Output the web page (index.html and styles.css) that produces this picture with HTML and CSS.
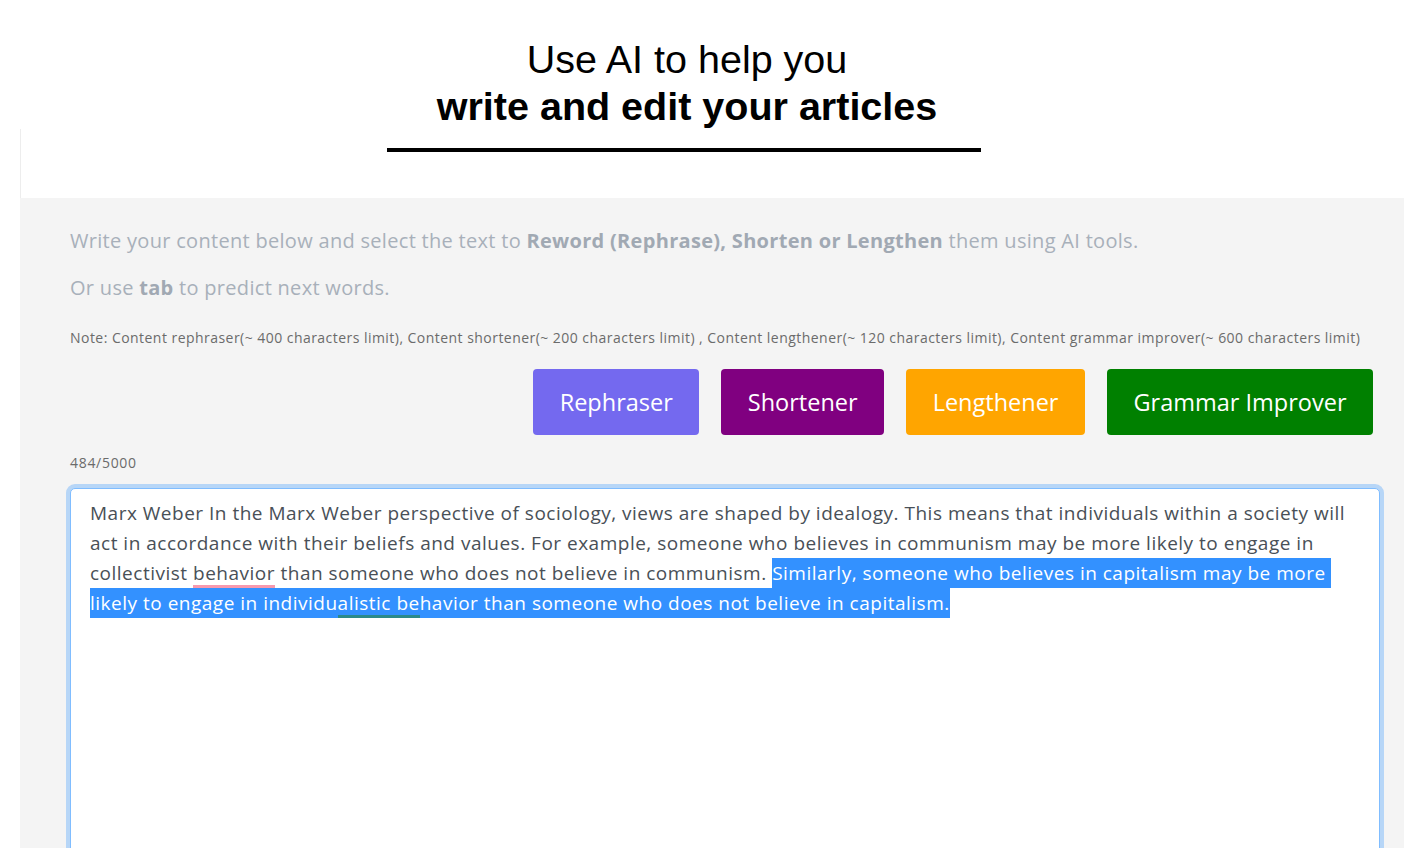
FILE: index.html
```html
<!DOCTYPE html>
<html lang="en">
<head>
<meta charset="utf-8">
<title>AI Writer</title>
<link rel="stylesheet" href="styles.css">
</head>
<body>
<div class="page">
  <header class="hero">
    <h1 class="hero-title"><span class="hero-light">Use AI to help you</span><span class="hero-bold">write and edit your articles</span></h1>
  </header>
  <section class="panel">
    <div class="panel-top"><div class="divider"></div></div>
    <div class="panel-body">
      <p class="intro intro-first">Write your content below and select the text to <b>Reword (Rephrase), Shorten or Lengthen</b> them using AI tools.</p>
      <p class="intro intro-second">Or use <b>tab</b> to predict next words.</p>
      <p class="note">Note: Content rephraser(~ 400 characters limit), Content shortener(~ 200 characters limit) , Content lengthener(~ 120 characters limit), Content grammar improver(~ 600 characters limit)</p>
      <div class="actions">
        <button class="btn btn-rephrase">Rephraser</button>
        <button class="btn btn-shorten">Shortener</button>
        <button class="btn btn-lengthen">Lengthener</button>
        <button class="btn btn-grammar">Grammar Improver</button>
      </div>
      <div class="counter">484/5000</div>
      <div class="editor">Marx Weber In the Marx Weber perspective of sociology, views are shaped by idealogy. This means that individuals within a society will<br>act in accordance with their beliefs and values. For example, someone who believes in communism may be more likely to engage in<br>collectivist <span class="spell">behavior</span> than someone who does not believe in communism. <span class="sel">Similarly, someone who believes in capitalism may be more&nbsp;<br>likely to engage in individu<span class="gram">alistic be</span>havior than someone who does not believe in capitalism.</span></div>
    </div>
  </section>
</div>
</body>
</html>
```
FILE: styles.css
```css
* { box-sizing: border-box; }
html, body { margin: 0; padding: 0; background: #fff; }
body { font-family: "Open Sans", "Lato", sans-serif; overflow: hidden; height: 848px; }

.page { width: 1424px; }

.hero { width: 594px; margin-left: 390px; padding-top: 36px; }
.hero-title {
  margin: 0;
  font-family: "Liberation Sans", Arial, sans-serif;
  font-size: 39.5px;
  line-height: 46.5px;
  text-align: center;
  color: #000;
}
.hero-light { display: block; font-weight: 400; }
.hero-bold { display: block; font-weight: 700; }

.panel { margin: 0 20px; }
.panel-top {
  height: 69px;
  padding-top: 19px;
  border-left: 1px solid #ededed;
}
.divider { width: 594px; height: 4px; margin-left: 366px; background: #000; }

.panel-body {
  background: #f4f4f4;
  padding: 29px 24px 0 50px;
  height: 660px;
}
.intro {
  margin: 0;
  font-size: 20px;
  line-height: 27px;
  letter-spacing: 0.3px;
  color: #a8b0ba;
}
.intro b { font-weight: 700; color: #a1a9b3; }
.intro-first { margin-bottom: 20px; }
.intro-second { margin-bottom: 27px; }
.note {
  margin: 0 0 21px;
  font-size: 14px;
  line-height: 20px;
  letter-spacing: 0.46px;
  color: #6b6b6b;
}
.actions {
  display: flex;
  justify-content: flex-end;
  gap: 22px;
  padding-right: 7px;
}
.btn {
  height: 66px;
  padding: 0 26.5px;
  border: 0;
  border-radius: 4px;
  color: #fff;
  font-family: inherit;
  font-size: 23.5px;
  cursor: pointer;
}
.btn-rephrase { background: #7469ef; }
.btn-shorten { background: #800080; }
.btn-lengthen { background: #ffa500; }
.btn-grammar { background: #008000; }

.counter {
  margin: 18px 0 15px;
  font-size: 14px;
  line-height: 20px;
  letter-spacing: 0.7px;
  color: #6b6b6b;
}
.editor {
  height: 420px;
  background: #fff;
  border: 1px solid #80bdff;
  border-radius: 5px;
  box-shadow: 0 0 0 4px rgba(0, 123, 255, 0.25);
  padding: 9px 19px;
  font-size: 19px;
  line-height: 30px;
  letter-spacing: 0.5px;
  color: #495057;
}
.sel {
  background: #3391ff;
  color: #fff;
  padding: 2px 0;
}
.spell {
  background: linear-gradient(#f799ae, #f799ae) left bottom / 100% 3px no-repeat;
  padding-bottom: 2px;
}
.gram {
  background: linear-gradient(#2c8a8a, #2c8a8a) left bottom / 100% 3px no-repeat;
  padding-bottom: 2px;
}
```
